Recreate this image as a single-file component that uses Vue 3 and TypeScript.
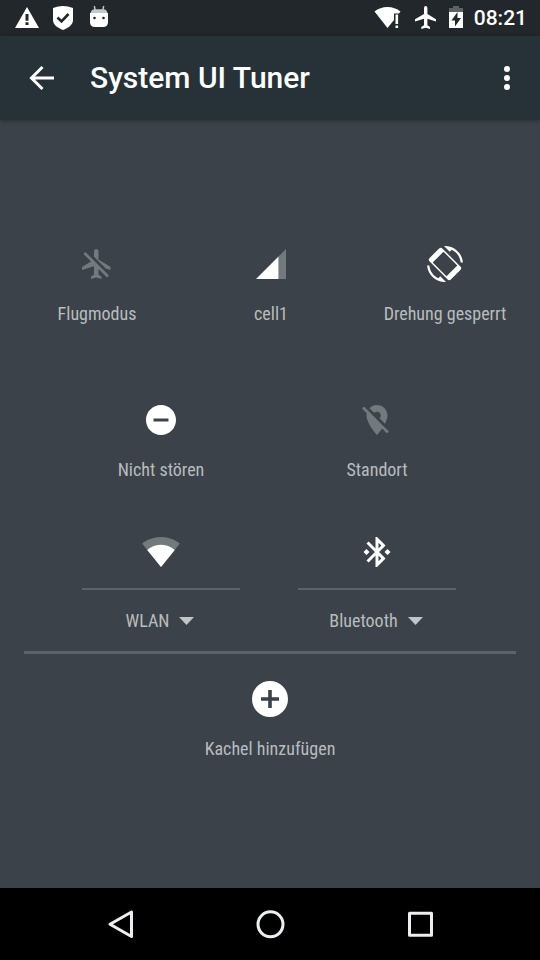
<script setup lang="ts">
interface Tile {
  label: string
  icon: 'airplane' | 'cell' | 'rotation' | 'dnd' | 'location' | 'wifi' | 'bluetooth'
  off?: boolean
}

const topTiles: Tile[] = [
  { label: 'Flugmodus', icon: 'airplane', off: true },
  { label: 'cell1', icon: 'cell' },
  { label: 'Drehung gesperrt', icon: 'rotation' },
]

const middleTiles: Tile[] = [
  { label: 'Nicht stören', icon: 'dnd' },
  { label: 'Standort', icon: 'location', off: true },
]

const detailTiles: Tile[] = [
  { label: 'WLAN', icon: 'wifi' },
  { label: 'Bluetooth', icon: 'bluetooth' },
]

const paths: Record<string, string> = {
  airplane:
    'M13 9V3.5C13 2.67 12.33 2 11.5 2S10 2.67 10 3.5v3.68l7.83 7.83L21 16v-2l-8-5zM3 5.27l4.99 4.99L2 14v2l8-2.5V19l-2 1.5V22l3.5-1 3.5 1v-1.5L13 19v-3.73L18.73 21 20 19.73 4.27 4 3 5.27z',
  cell: 'M2 22h15V7z',
  rotation:
    'M16.48 2.52c3.27 1.55 5.61 4.72 5.97 8.48h1.5C23.44 4.84 18.29 0 12 0l-.66.03 3.81 3.81 1.33-1.32zM7.52 21.48C4.25 19.94 1.91 16.76 1.55 13H.05C.56 19.16 5.71 24 12 24l.66-.03-3.81-3.81-1.33 1.32zM10.23 1.6c-.59-.59-1.54-.59-2.12 0L1.6 8.11c-.59.59-.59 1.54 0 2.12L13.77 22.4c.59.59 1.54.59 2.12 0l6.51-6.51c.59-.59.59-1.54 0-2.12zM11 3.8 20.2 13 13 20.2 3.8 11z',
  dnd: 'M12 2C6.48 2 2 6.48 2 12s4.48 10 10 10 10-4.48 10-10S17.52 2 12 2zm5 11H7v-2h10v2z',
  location:
    'M12 6.5c1.38 0 2.5 1.12 2.5 2.5 0 .74-.33 1.39-.83 1.85l3.63 3.63c.98-1.86 1.7-3.8 1.7-5.48 0-3.87-3.13-7-7-7-1.98 0-3.76.83-5.04 2.15l3.19 3.19c.46-.52 1.11-.84 1.85-.84zm4.37 9.6l-4.63-4.63-.11-.11L3.27 3 2 4.27l3.18 3.18C5.07 7.95 5 8.47 5 9c0 5.25 7 13 7 13s1.67-1.85 3.38-4.35L18.73 21 20 19.73l-3.63-3.63z',
  wifi: 'M12 22 21.2 10.7C20.6 10.2 17.4 7.1 12 7.1S3.4 10.2 2.8 10.7z',
  bluetooth:
    'M7 12l-2-2-2 2 2 2 2-2zm10.71-4.29L12 2h-1v7.59L6.41 5 5 6.41 10.59 12 5 17.59 6.41 19 11 14.41V22h1l5.71-5.71-4.3-4.29 4.3-4.29zM13 5.83l1.88 1.88L13 9.59V5.83zm1.88 10.46L13 18.17v-3.76l1.88 1.88zM19 10l-2 2 2 2 2-2-2-2z',
}

const dimPaths: Record<string, string> = {
  cell: 'M17 22h5V2l-5 5z',
  wifi: 'M12 22 24.6 6.4C24.1 6 19.3 2 12 2S-.1 6-.6 6.4z',
}
</script>

<template>
  <div class="screen">
    <div class="status-bar">
      <div class="notifications">
        <svg class="status-icon" viewBox="0 0 24 24" aria-hidden="true">
          <path fill-rule="evenodd" d="M0 22 12 1l12 21zM10.5 8v6.7h3V8zM10.5 16.3v2.7h3v-2.7z" />
        </svg>
        <svg class="status-icon" viewBox="0 0 24 24" aria-hidden="true">
          <path d="M2 2Q7 0 12 0T22 2V14C22 19 17 22 12 24 7 22 2 19 2 14z" />
          <path class="cut-line" d="M6.5 11.5 10.5 15.5 17.5 8" />
        </svg>
        <svg class="status-icon" viewBox="0 0 24 24" aria-hidden="true">
          <path class="droid-line" d="M7.3 0 8.2 4M16.7 0 15.8 4" />
          <path class="droid-head" d="M3.5 8Q3.5 3.3 8 3.3H16Q20.5 3.3 20.5 8z" />
          <path d="M3 7H21V16Q21 21 16 21H8Q3 21 3 16z" />
          <circle class="cut" cx="7.5" cy="12" r="1.3" />
          <circle class="cut" cx="16.5" cy="12" r="1.3" />
        </svg>
      </div>
      <div class="system-icons">
        <svg class="status-icon wide" viewBox="0 0 36 24" aria-hidden="true">
          <path d="M15.5 22 2.5 5.5Q8 1 15.5 1T28.5 5.5L27 7.5H22V14z" />
          <path d="M23.5 8.5h2.6V18h-2.6zM23.5 19.5h2.6V22h-2.6z" />
        </svg>
        <svg class="status-icon" viewBox="0 0 24 24" aria-hidden="true">
          <path d="M22 15.5v-2.3L13.4 8V2Q13.4 0 11.7 0T10 2v6L1 13.2v2.3l9-2.7v6.4l-2.7 1.9V23l4.4-1.2L16 23v-1.9l-2.6-1.9v-6.4z" />
        </svg>
        <svg class="status-icon" viewBox="0 0 24 24" aria-hidden="true">
          <path class="battery-rest" d="M5 7V2H9V0H15V2H19V7z" />
          <path d="M5 6H19V22H5z" />
          <path class="cut" d="M13.5 6 7.5 14.5H11V20.5L17 12H13.5z" />
        </svg>
        <time class="clock">08:21</time>
      </div>
    </div>

    <header class="toolbar">
      <button class="icon-button" type="button" aria-label="Nach oben">
        <svg class="icon" viewBox="0 0 36 36" aria-hidden="true">
          <path class="stroke" d="M30 18H8M18.5 7 7.5 18 18.5 29" />
        </svg>
      </button>
      <h1 class="title">System UI Tuner</h1>
      <button class="icon-button" type="button" aria-label="Weitere Optionen">
        <svg class="icon" viewBox="0 0 36 36" aria-hidden="true">
          <circle cx="18" cy="9" r="3" />
          <circle cx="18" cy="18" r="3" />
          <circle cx="18" cy="27" r="3" />
        </svg>
      </button>
    </header>

    <main class="content">
      <div class="row three">
        <button v-for="tile in topTiles" :key="tile.label" class="tile" type="button">
          <svg class="icon" :class="{ off: tile.off }" viewBox="0 0 24 24" aria-hidden="true">
            <path v-if="dimPaths[tile.icon]" class="dim" :d="dimPaths[tile.icon]" />
            <path fill-rule="evenodd" :d="paths[tile.icon]" />
          </svg>
          <span class="label">{{ tile.label }}</span>
        </button>
      </div>

      <div class="row two">
        <button v-for="tile in middleTiles" :key="tile.label" class="tile" type="button">
          <svg class="icon" :class="{ off: tile.off }" viewBox="0 0 24 24" aria-hidden="true">
            <path fill-rule="evenodd" :d="paths[tile.icon]" />
          </svg>
          <span class="label">{{ tile.label }}</span>
        </button>
      </div>

      <div class="row two details">
        <div v-for="tile in detailTiles" :key="tile.label" class="detail">
          <button class="toggle" type="button" :aria-label="tile.label">
            <svg class="icon" viewBox="0 0 24 24" aria-hidden="true">
              <path v-if="dimPaths[tile.icon]" class="dim" :d="dimPaths[tile.icon]" />
              <path fill-rule="evenodd" :d="paths[tile.icon]" />
            </svg>
          </button>
          <button class="more" type="button">
            <span class="label">{{ tile.label }}</span>
            <svg class="arrow" viewBox="0 0 15 8" aria-hidden="true"><path d="M0 0h15L7.5 8z" /></svg>
          </button>
        </div>
      </div>

      <hr class="divider" />

      <button class="tile add" type="button">
        <svg class="icon" viewBox="0 0 36 36" aria-hidden="true">
          <path fill-rule="evenodd" d="M18 0a18 18 0 1 0 0 36 18 18 0 0 0 0-36zM16.2 9h3.6v7.2H27v3.6h-7.2V27h-3.6v-7.2H9v-3.6h7.2z" />
        </svg>
        <span class="label">Kachel hinzufügen</span>
      </button>
    </main>

    <nav class="nav-bar">
      <button class="icon-button" type="button" aria-label="Zurück">
        <svg class="icon" viewBox="0 0 36 36" aria-hidden="true">
          <path class="nav-stroke" d="M29.5 6V30.5L8 18.2z" />
        </svg>
      </button>
      <button class="icon-button" type="button" aria-label="Startbildschirm">
        <svg class="icon" viewBox="0 0 36 36" aria-hidden="true">
          <circle class="nav-stroke" cx="18.5" cy="18.3" r="12.5" />
        </svg>
      </button>
      <button class="icon-button" type="button" aria-label="Übersicht">
        <svg class="icon" viewBox="0 0 36 36" aria-hidden="true">
          <rect class="nav-stroke" x="7.5" y="7.3" width="22" height="22" />
        </svg>
      </button>
    </nav>
  </div>
</template>

<style>
body {
  margin: 0;
  background: #3b4249;
}
</style>

<style scoped>
.screen {
  display: flex;
  flex-direction: column;
  min-height: 100vh;
  background: #3b4249;
  color: #fff;
  font-family: Roboto, sans-serif;
}

button {
  margin: 0;
  padding: 0;
  border: 0;
  background: none;
  color: inherit;
  font: inherit;
  cursor: pointer;
}

svg {
  display: block;
  flex: none;
  fill: #fff;
  overflow: visible;
}

.status-bar {
  display: flex;
  align-items: center;
  justify-content: space-between;
  height: 36px;
  padding: 0 13px 0 15px;
  background: #22272b;
}

.notifications {
  display: flex;
  gap: 12px;
}

.system-icons {
  display: flex;
  align-items: center;
  gap: 6px;
}

.status-icon {
  width: 24px;
  height: 24px;
}

.status-icon.wide {
  width: 36px;
}

.cut {
  fill: #22272b;
}

.cut-line {
  fill: none;
  stroke: #22272b;
  stroke-width: 2.6;
}

.droid-line {
  fill: none;
  stroke: #c5c8ca;
  stroke-width: 1.4;
}

.droid-head {
  fill: #c5c8ca;
}

.battery-rest {
  fill: #5d6265;
}

.clock {
  font-size: 21px;
  font-weight: 500;
  line-height: 24px;
}

.toolbar {
  display: flex;
  align-items: center;
  height: 84px;
  padding: 0 15px 0 24px;
  background: #263238;
  box-shadow: 0 1px 4px rgba(0, 0, 0, 0.3);
}

.title {
  flex: 1;
  margin: 0 0 0 30px;
  font-size: 30px;
  font-weight: 500;
  line-height: 36px;
}

.icon {
  width: 36px;
  height: 36px;
}

.stroke {
  fill: none;
  stroke: #fff;
  stroke-width: 3;
}

.dim,
.off {
  fill: #727a7d;
}

.content {
  flex: 1;
  display: flex;
  flex-direction: column;
  padding: 126px 0 24px;
}

.row {
  display: grid;
}

.three {
  grid-template-columns: repeat(3, 1fr);
  padding: 0 8px 0 10px;
}

.two {
  grid-template-columns: repeat(2, 1fr);
  margin-top: 76px;
  padding: 0 55px 0 53px;
}

.tile {
  display: flex;
  flex-direction: column;
  align-items: center;
  gap: 20px;
}

.label {
  color: #b9bcbe;
  font-family: "Roboto Condensed", Roboto, sans-serif;
  font-size: 18px;
  line-height: 24px;
  white-space: nowrap;
}

.details {
  margin-top: 52px;
}

.detail {
  display: flex;
  flex-direction: column;
  margin: 0 29px;
}

.toggle {
  display: flex;
  justify-content: center;
  padding-bottom: 18px;
  border-bottom: 2px solid #5b626a;
}

.more {
  display: flex;
  align-items: center;
  justify-content: center;
  gap: 10px;
  padding: 19px 2px 18px 0;
}

.arrow {
  width: 15px;
  height: 8px;
  fill: #c1c5c6;
}

.divider {
  align-self: stretch;
  height: 3px;
  margin: 0 24px 27px;
  border: 0;
  background: #5b626a;
}

.add {
  align-self: center;
}

.nav-bar {
  display: flex;
  align-items: center;
  justify-content: space-around;
  height: 72px;
  padding: 0 45px;
  background: #000;
}

.nav-stroke {
  fill: none;
  stroke: #eceff0;
  stroke-width: 3;
  stroke-linejoin: round;
}
</style>
